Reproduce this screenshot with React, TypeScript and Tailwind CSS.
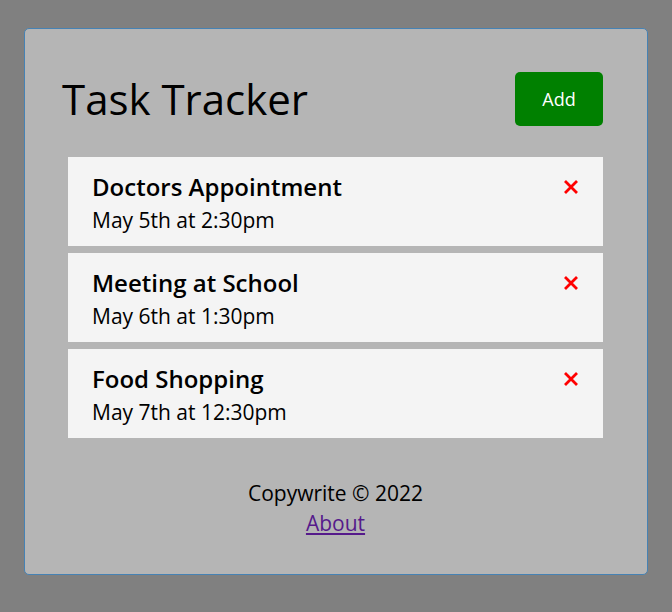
import React from "react";

const tasks = [
  { text: "Doctors Appointment", day: "May 5th at 2:30pm" },
  { text: "Meeting at School", day: "May 6th at 1:30pm" },
  { text: "Food Shopping", day: "May 7th at 12:30pm" },
];

function XIcon() {
  return (
    <svg width="16" height="16" viewBox="0 0 16 16" className="mr-[-1px]">
      <path d="M2 2 L14 14 M14 2 L2 14" stroke="#ff0000" strokeWidth="2.8" strokeLinecap="butt" />
    </svg>
  );
}

export default function App() {
  return (
    <div
      className="min-h-screen bg-[#808080] pt-[28px]"
      style={{ fontFamily: '"Open Sans", "Noto Sans", sans-serif' }}
    >
      <div className="w-[624px] h-[547px] mx-auto border border-[#4682b4] rounded-[5px] bg-[#b5b5b5] pl-[43px] pr-[44px] pt-[43px]">
        <header className="flex items-center justify-between h-[54px]">
          <h1 className="ml-[-6px] text-[42px] leading-none text-black font-normal">
            Task Tracker
          </h1>
          <button className="w-[88px] h-[54px] rounded-[5px] bg-[#008000] text-white text-[18px]">
            Add
          </button>
        </header>
        <div className="mt-[31px] flex flex-col gap-[7px]">
          {tasks.map((t) => (
            <div
              key={t.text}
              className="h-[89px] bg-[#f4f4f4] pl-[24px] pr-[25px] pt-[15px]"
            >
              <div className="flex items-center justify-between h-[30px]">
                <h3 className="text-[24px] font-semibold text-black leading-none">
                  {t.text}
                </h3>
                <XIcon />
              </div>
              <p className="mt-[8px] text-[21px] text-black leading-none">{t.day}</p>
            </div>
          ))}
        </div>
        <footer className="mt-[40px] flex flex-col items-center text-black text-[21px]">
          <p className="h-[30px] leading-[30px]">Copywrite © 2022</p>
          <a href="#" className="h-[30px] leading-[30px] underline text-[#551a8b]">
            About
          </a>
        </footer>
      </div>
    </div>
  );
}
